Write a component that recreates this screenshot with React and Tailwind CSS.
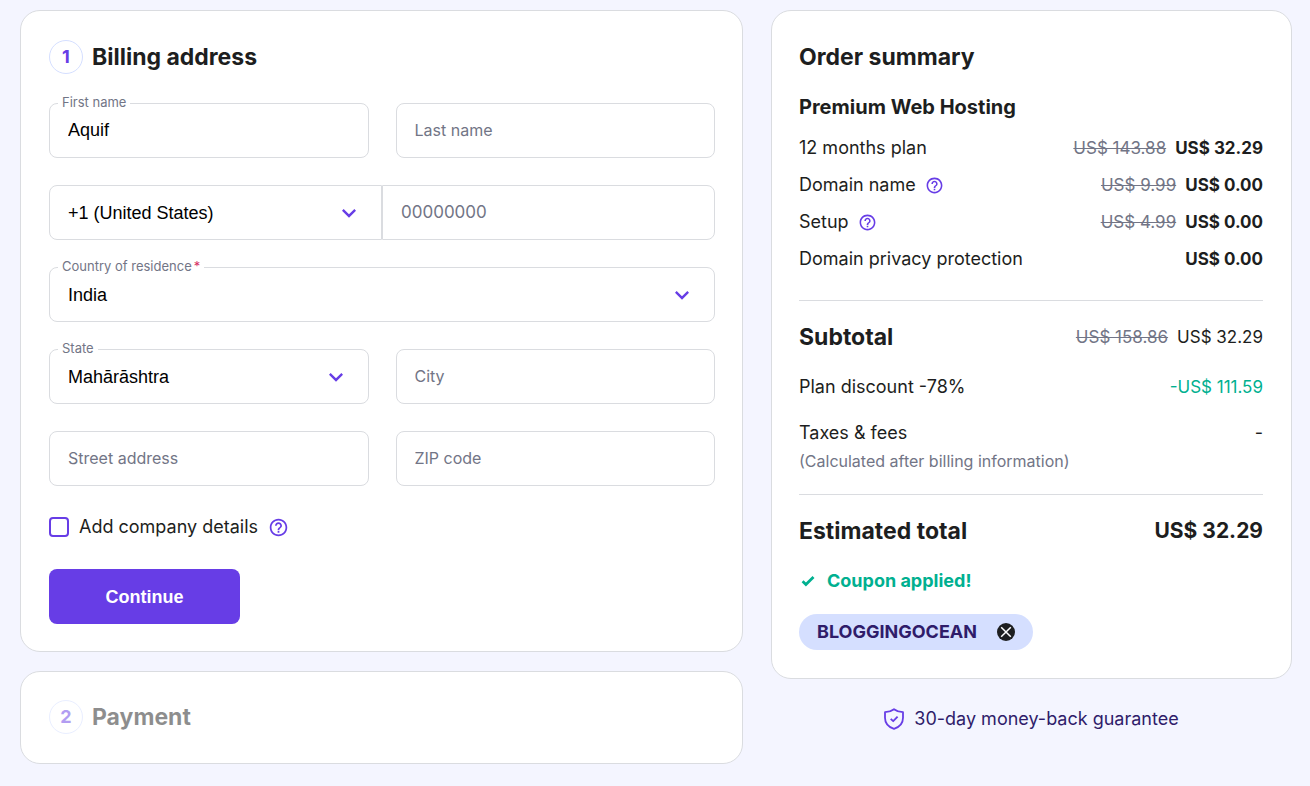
import { useState } from "react";
import { MdExpandMore, MdHelpOutline } from "react-icons/md";

const planRows = [
  { name: "12 months plan", oldPrice: "US$ 143.88", price: "US$ 32.29" },
  { name: "Domain name", help: true, oldPrice: "US$ 9.99", price: "US$ 0.00" },
  { name: "Setup", help: true, oldPrice: "US$ 4.99", price: "US$ 0.00" },
  { name: "Domain privacy protection", price: "US$ 0.00" },
];

const fieldClass =
  "h-[55px] w-full border border-[#dadce0] bg-white px-[18px] font-['Liberation_Sans',sans-serif] text-lg text-black outline-none placeholder:font-[Inter,sans-serif] placeholder:text-[#727586] placeholder:opacity-100 focus:border-[#673de6]";

function HelpButton({ topic, className }) {
  return (
    <button type="button" aria-label={`Help: ${topic}`} className="text-[#673de6]">
      <MdHelpOutline className={className} />
    </button>
  );
}

function FloatingLabel({ htmlFor, children }) {
  return (
    <label
      htmlFor={htmlFor}
      className="absolute -top-2.5 left-[9px] bg-white px-1 text-[13px] leading-[18px] text-[#727586]"
    >
      {children}
    </label>
  );
}

function TextField({ id, label, value }) {
  return (
    <div className="relative">
      {value && <FloatingLabel htmlFor={id}>{label}</FloatingLabel>}
      <input
        id={id}
        type="text"
        aria-label={label}
        placeholder={label}
        defaultValue={value}
        className={`${fieldClass} rounded-lg placeholder:text-base`}
      />
    </div>
  );
}

function SelectField({ id, label, options, hideLabel, required, rounded = "rounded-lg" }) {
  return (
    <div className="relative">
      {!hideLabel && (
        <FloatingLabel htmlFor={id}>
          {label}
          {required && <span className="ml-0.5 text-[#d63163]">*</span>}
        </FloatingLabel>
      )}
      <select id={id} aria-label={label} className={`${fieldClass} ${rounded} appearance-none`}>
        {options.map((option) => (
          <option key={option}>{option}</option>
        ))}
      </select>
      <MdExpandMore className="pointer-events-none absolute top-3.5 right-[19px] size-7 text-[#673de6]" />
    </div>
  );
}

function StepHeading({ number, title }) {
  return (
    <div className="flex items-center gap-[9px]">
      <span className="flex size-[34px] items-center justify-center rounded-full border border-[#d5dfff] text-lg font-bold text-[#673de6]">
        {number}
      </span>
      <h2 className="text-[23px] leading-[34px] font-bold">{title}</h2>
    </div>
  );
}

function Prices({ oldPrice, price, bold }) {
  return (
    <span className="flex gap-[9px] text-[17px]">
      {oldPrice && <s className="text-[#727586]">{oldPrice}</s>}
      <span className={bold ? "font-bold" : ""}>{price}</span>
    </span>
  );
}

function BillingAddress() {
  const [company, setCompany] = useState(false);

  return (
    <section className="rounded-[20px] border border-[#dadce0] bg-white pt-[29px] pr-[27px] pb-[27px] pl-7">
      <StepHeading number="1" title="Billing address" />

      <form className="mt-[29px]" onSubmit={(e) => e.preventDefault()}>
        <div className="grid grid-cols-2 gap-[27px]">
          <TextField id="first-name" label="First name" value="Aquif" />
          <TextField id="last-name" label="Last name" />

          {/* Phone */}
          <div className="col-span-2 grid grid-cols-2">
            <SelectField
              id="phone-code"
              label="Phone code"
              hideLabel
              options={["+1 (United States)", "+91 (India)"]}
              rounded="rounded-l-lg"
            />
            <input
              type="tel"
              aria-label="Phone number"
              placeholder="00000000"
              className={`${fieldClass} rounded-r-lg placeholder:text-[17px]`}
            />
          </div>

          <div className="col-span-2">
            <SelectField
              id="country"
              label="Country of residence"
              required
              options={["India", "United States"]}
            />
          </div>

          <SelectField id="state" label="State" options={["Mahārāshtra", "Gujarāt"]} />
          <TextField id="city" label="City" />
          <TextField id="street" label="Street address" />
          <TextField id="zip" label="ZIP code" />
        </div>

        {/* Company details */}
        <div className="mt-[27px] flex items-center gap-2.5">
          <input
            id="company"
            type="checkbox"
            checked={company}
            onChange={(e) => setCompany(e.target.checked)}
            className="size-5 appearance-none rounded border-2 border-[#673de6] bg-white checked:bg-[#673de6]"
          />
          <label htmlFor="company" className="text-lg">
            Add company details
          </label>
          <HelpButton topic="company details" className="size-[21px]" />
        </div>

        <button
          type="submit"
          className="mt-7 h-[55px] w-[191px] rounded-lg bg-[#673de6] font-['Liberation_Sans',sans-serif] text-lg font-bold text-white hover:bg-[#5025d1]"
        >
          Continue
        </button>
      </form>
    </section>
  );
}

function OrderSummary() {
  return (
    <section className="rounded-[20px] border border-[#dadce0] bg-white pt-[29px] pr-7 pb-7 pl-[27px] text-lg leading-7">
      <h2 className="text-[23px] leading-[34px] font-bold">Order summary</h2>
      <h3 className="mt-[19px] text-xl leading-7 font-bold">Premium Web Hosting</h3>

      <ul className="mt-[13px] flex flex-col gap-[9px]">
        {planRows.map((row) => (
          <li key={row.name} className="flex items-center justify-between">
            <span className="flex items-center gap-[9px]">
              {row.name}
              {row.help && <HelpButton topic={row.name} className="size-[19px]" />}
            </span>
            <Prices oldPrice={row.oldPrice} price={row.price} bold />
          </li>
        ))}
      </ul>

      {/* Subtotal */}
      <div className="mt-[27px] flex items-center justify-between border-t border-[#dadce0] pt-[19px]">
        <h2 className="text-[23px] leading-[34px] font-bold">Subtotal</h2>
        <Prices oldPrice="US$ 158.86" price="US$ 32.29" />
      </div>
      <div className="mt-[19px] flex items-center justify-between">
        <span>Plan discount -78%</span>
        <span className="text-[17px] text-[#00b090]">-US$ 111.59</span>
      </div>
      <div className="mt-[18px] flex justify-between">
        <span>Taxes &amp; fees</span>
        <span>-</span>
      </div>
      <p className="mt-0.5 text-base leading-6 text-[#727586]">
        (Calculated after billing information)
      </p>

      {/* Total */}
      <div className="mt-[21px] flex items-center justify-between border-t border-[#dadce0] pt-[19px] leading-[34px] font-bold">
        <h2 className="text-[23px]">Estimated total</h2>
        <span className="text-[21px]">US$ 32.29</span>
      </div>

      <p className="mt-[19px] flex items-center gap-2.5 font-bold text-[#00b090]">
        <svg viewBox="0 0 18 18" className="size-[18px]" fill="none">
          <path d="M3.6 9.3l3.3 3.2 7.6-7.5" stroke="currentColor" strokeWidth="2.8" />
        </svg>
        Coupon applied!
      </p>

      <div className="mt-[19px] inline-flex h-9 items-center gap-5 rounded-full bg-[#d5dfff] px-[18px] align-top font-bold text-[#2f1c6a]">
        BLOGGINGOCEAN
        <button type="button" aria-label="Remove coupon">
          <svg viewBox="0 0 18 18" className="size-[18px]">
            <circle cx="9" cy="9" r="9" fill="#1d1e20" />
            <path d="M4.2 4.2l9.6 9.6M13.8 4.2l-9.6 9.6" stroke="#fff" strokeWidth="1.5" />
          </svg>
        </button>
      </div>
    </section>
  );
}

export default function App() {
  return (
    <main className="min-h-screen bg-[#f4f5ff] pt-2.5 pr-[18px] pb-[22px] pl-5 font-[Inter,sans-serif] text-[#1d1e20]">
      <div className="grid grid-cols-[723fr_521fr] items-start gap-7">
        <div className="flex flex-col gap-[19px]">
          <BillingAddress />
          <section className="rounded-[20px] border border-[#dadce0] bg-white px-7 pt-7 pb-[29px]">
            <div className="opacity-50">
              <StepHeading number="2" title="Payment" />
            </div>
          </section>
        </div>

        <div>
          <OrderSummary />
          <p className="mt-[26px] flex items-center justify-center gap-2.5 text-lg leading-7 text-[#2f1c6a]">
            <svg
              viewBox="0 0 20 22"
              className="h-[22px] w-5 text-[#673de6]"
              fill="none"
              stroke="currentColor"
              strokeWidth="1.8"
              strokeLinejoin="round"
            >
              <path d="M10 1.2c2.6 2 5.5 2.8 9 3v5.500c0 5.300-3.400 9.300-9 11.100-5.600-1.800-9-5.800-9-11.100V4.200c3.500-.2 6.400-1 9-3z" />
              <path d="M6.700 10.800l2.500 2.400 4.400-4.600" />
            </svg>
            30-day money-back guarantee
          </p>
        </div>
      </div>
    </main>
  );
}
